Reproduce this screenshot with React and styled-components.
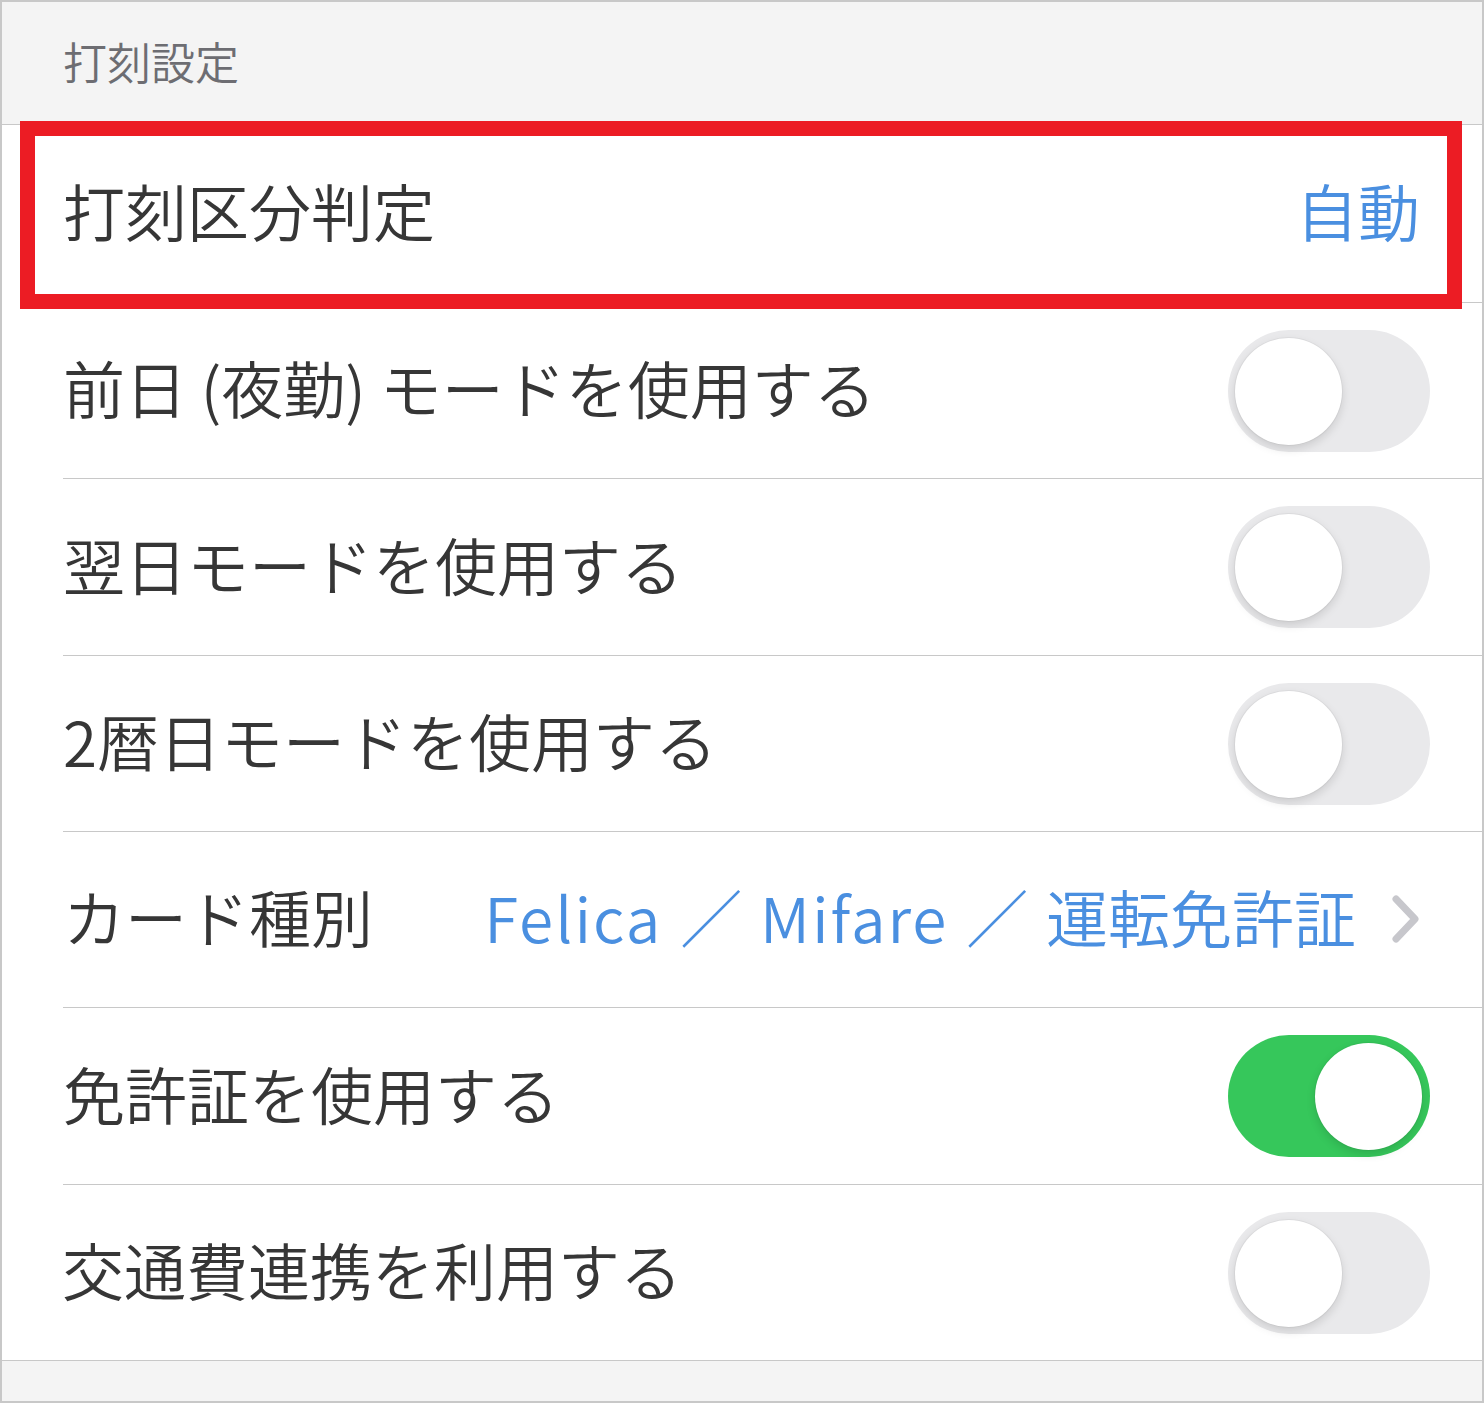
import React from 'react';
import styled, { createGlobalStyle } from 'styled-components';

const GlobalStyle = createGlobalStyle`
  html, body {
    margin: 0;
    padding: 0;
    background: #ffffff;
  }
  body {
    font-family: "Noto Sans CJK JP", "Noto Sans", sans-serif;
  }
`;

const Frame = styled.div`
  width: 1484px;
  height: 1403px;
  box-sizing: border-box;
  border: 2px solid #c8c8c8;
  background: #f4f4f4;
  display: flex;
  flex-direction: column;
  overflow: hidden;
`;

const SectionHeader = styled.div`
  height: 123px;
  box-sizing: border-box;
  border-bottom: 1px solid #c8c8c8;
  display: flex;
  align-items: center;
  padding-left: 61px;
  padding-bottom: 4px;
  font-size: 44px;
  font-weight: 350;
  color: #6d6d72;
`;

const List = styled.div`
  background: #ffffff;
  border-bottom: 1px solid #c8c8c8;
`;

const Row = styled.div`
  position: relative;
  height: ${(p) => p.$h}px;
  box-sizing: border-box;
  margin-left: ${(p) => (p.$last ? 0 : 61)}px;
  padding-left: ${(p) => (p.$last ? 60 : 0)}px;
  padding-right: 52px;
  display: flex;
  align-items: center;
  justify-content: space-between;
  border-bottom: ${(p) => (p.$last ? 'none' : '1px solid #c8c8c8')};

  ${(p) =>
    p.$highlight &&
    `
    &::after {
      content: '';
      position: absolute;
      left: -43px;
      right: 20px;
      top: -4px;
      bottom: -7px;
      border: 15px solid #ec1c24;
      pointer-events: none;
      z-index: 2;
    }
  `}
`;

const Label = styled.span`
  font-size: 62px;
  font-weight: 350;
  line-height: 1.2;
  padding-bottom: 6px;
  color: #363636;
  white-space: nowrap;
`;

const Value = styled.span`
  display: flex;
  align-items: center;
  gap: 36px;
  margin-right: 10px;
  font-size: 62px;
  font-weight: 350;
  line-height: 1.2;
  color: #4a8fe0;
  white-space: nowrap;
`;

const ValueText = styled.span`
  word-spacing: 4px;
  padding-bottom: 6px;
`;

const Latin = styled.span`
  letter-spacing: 2px;
`;

const Chevron = styled.svg`
  width: 28px;
  height: 48px;
  flex: none;
`;

const Track = styled.div`
  position: relative;
  width: 202px;
  height: 122px;
  border-radius: 61px;
  background: ${(p) => (p.$on ? '#36c75b' : '#e9e9eb')};
  flex: none;
`;

const Knob = styled.div`
  position: absolute;
  top: 8px;
  left: ${(p) => (p.$on ? 87 : 7)}px;
  width: 107px;
  height: 107px;
  border-radius: 50%;
  background: #ffffff;
  box-shadow: 0 0 0 1px rgba(0, 0, 0, 0.04), 0 4px 10px rgba(0, 0, 0, 0.13);
`;

const Footer = styled.div`
  flex: 1;
  background: #f4f4f4;
`;

const Toggle = ({ on }) => (
  <Track $on={on}>
    <Knob $on={on} />
  </Track>
);

const rows = [
  { label: '前日 (夜勤) モードを使用する', on: false, h: 176 },
  { label: '翌日モードを使用する', on: false, h: 177 },
  { label: '2暦日モードを使用する', on: false, h: 176 },
  { label: 'カード種別', card: true, h: 176 },
  { label: '免許証を使用する', on: true, h: 177 },
  { label: '交通費連携を利用する', on: false, h: 175 },
];

export default function App() {
  return (
    <>
      <GlobalStyle />
      <Frame>
        <SectionHeader>打刻設定</SectionHeader>
        <List>
          <Row $h={178} $highlight>
            <Label>打刻区分判定</Label>
            <Value>
              <ValueText>自動</ValueText>
            </Value>
          </Row>
          {rows.map((r, i) => (
            <Row key={r.label} $h={r.h} $last={i === rows.length - 1}>
              <Label>{r.label}</Label>
              {r.card ? (
                <Value>
                  <ValueText>
                    <Latin>Felica</Latin> ／ <Latin>Mifare</Latin> ／ 運転免許証
                  </ValueText>
                  <Chevron viewBox="0 0 28 48">
                    <path
                      d="M4 4 L23 24 L4 44"
                      fill="none"
                      stroke="#c7c7cc"
                      strokeWidth="7"
                      strokeLinecap="round"
                      strokeLinejoin="round"
                    />
                  </Chevron>
                </Value>
              ) : (
                <Toggle on={r.on} />
              )}
            </Row>
          ))}
        </List>
        <Footer />
      </Frame>
    </>
  );
}
